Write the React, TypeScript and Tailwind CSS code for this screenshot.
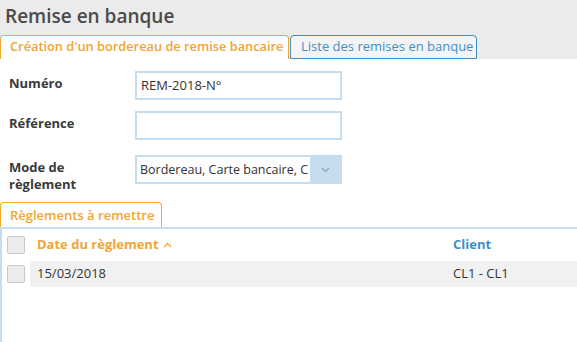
import React from "react";

const font = { fontFamily: '"Open Sans", "Noto Sans", sans-serif' };

const Checkbox: React.FC = () => (
  <div className="w-[18px] h-[18px] rounded-[2px] border border-[#c9c9c9] bg-[#ececec]" />
);

const Field: React.FC<{ label: React.ReactNode; children: React.ReactNode }> = ({
  label,
  children,
}) => (
  <div className="flex items-start">
    <div className="w-[135px] pl-[9px] text-[13px] font-bold text-[#3a3a3a] leading-[17px] pt-[4px]">
      {label}
    </div>
    {children}
  </div>
);

const App: React.FC = () => {
  return (
    <div className="w-[577px] h-[342px] bg-white overflow-hidden" style={font}>
      <div className="bg-[#ebebeb] pt-[3px] h-[59px]">
        <h1 className="pl-[5px] text-[19px] font-semibold leading-[26px] text-[#4a4a4a]">Remise en banque</h1>
        <div className="flex items-end mt-[6px] h-[24px]">
          <div className="w-[289px] h-[24px] bg-white border border-b-0 border-[#f0a535] rounded-t-[4px] pl-[9px] text-[12.8px] font-semibold text-[#f0a535] leading-[21px]">
            Création d'un bordereau de remise bancaire
          </div>
          <div className="ml-[1px] w-[187px] h-[24px] mb-0 bg-[#f4f4f4] border border-[#3d8fcb] rounded-t-[4px] pl-[10px] text-[13px] text-[#3d8fcb] leading-[21px]">
            Liste des remises en banque
          </div>
        </div>
      </div>

      <div className="flex flex-col gap-[11px] pt-[12px]">
        <Field label="Numéro">
          <div className="w-[207px] h-[29px] border-2 border-[#c6dcef] pl-[4px] text-[13px] text-[#333] leading-[25px]">
            REM-2018-N°
          </div>
        </Field>
        <Field label="Référence">
          <div className="w-[207px] h-[29px] border-2 border-[#c6dcef]" />
        </Field>
        <div className="mt-[4px]">
          <Field label={<>Mode de<br />règlement</>}>
            <div className="w-[207px] h-[29px] border-2 border-[#c6dcef] flex">
              <div className="flex-1 pl-[3px] text-[12.5px] text-[#333] leading-[25px] whitespace-nowrap">
                Bordereau, Carte bancaire, C
              </div>
              <div className="w-[30px] bg-[#c6dcef] flex items-center justify-center">
                <svg width="9" height="6" viewBox="0 0 9 6">
                  <path d="M1 1l3.5 3.5L8 1" fill="none" stroke="#8aa0b4" strokeWidth="1.2" />
                </svg>
              </div>
            </div>
          </Field>
        </div>
      </div>

      <div className="mt-[9px]">
        <div className="w-[162px] h-[25px] border border-b-0 border-[#f0a535] rounded-t-[4px] pl-[9px] text-[13px] font-semibold text-[#f0a535] leading-[24px]">
          Règlements à remettre
        </div>
        <div className="border-t-2 border-l-2 border-[#c6dcef] h-[120px]">
          <div className="flex items-center h-[32px]">
            <div className="w-[28px] pl-[5px]">
              <Checkbox />
            </div>
            <div className="w-[423px] pl-[7px] text-[13px] font-bold text-[#f0a535] flex items-center gap-[4px]">
              Date du règlement
              <svg width="9" height="6" viewBox="0 0 9 6">
                <path d="M1 5l3.5-3.5L8 5" fill="none" stroke="#f0a535" strokeWidth="1.4" />
              </svg>
            </div>
            <div className="text-[13px] font-bold text-[#3d8fcb]">Client</div>
          </div>
          <div className="flex items-center h-[26px]">
            <div className="w-[28px] pl-[5px]">
              <Checkbox />
            </div>
            <div className="flex-1 flex items-center h-full bg-[#f1f1f1] text-[13px] text-[#333]">
              <div className="w-[423px] pl-[7px]">15/03/2018</div>
              <div>CL1 - CL1</div>
            </div>
          </div>
        </div>
      </div>
    </div>
  );
};

export default App;
